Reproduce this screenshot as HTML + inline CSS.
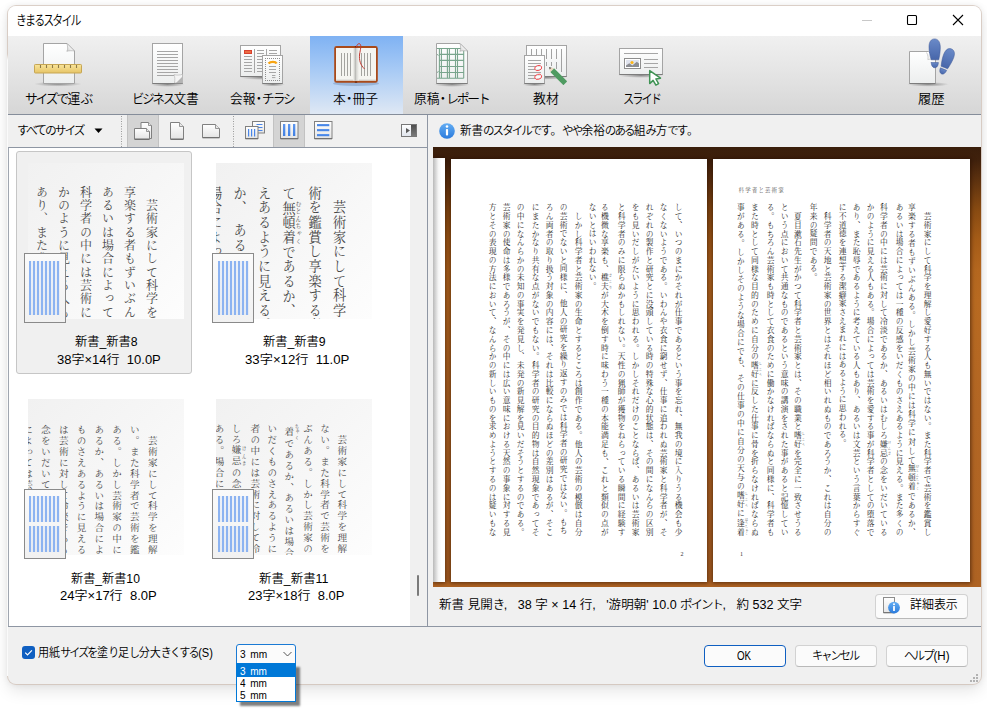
<!DOCTYPE html>
<html lang="ja">
<head>
<meta charset="utf-8">
<title>きまるスタイル</title>
<style>
html,body{margin:0;padding:0;}
body{width:987px;height:718px;overflow:hidden;background:#fff;position:relative;
  font-family:"Liberation Sans","Noto Sans CJK JP",sans-serif;font-size:13px;color:#000;}
.abs,.t,.inner *{position:absolute;box-sizing:border-box;}
.t{white-space:nowrap;line-height:20px;height:20px;letter-spacing:0;color:#000;transform-origin:0 50%;font-weight:350;}
.k{position:static !important;letter-spacing:-.17em;margin-right:.05em;}
.d{position:static !important;margin:0 -.24em;}
.winbg{position:absolute;left:8px;top:6px;width:973px;height:678px;border-radius:8px;background:#f0f0f0;
  box-shadow:0 0 0 1px rgba(205,185,172,.6),0 7px 16px rgba(0,0,0,.10),0 0 7px rgba(0,0,0,.09);}
.clip{position:absolute;left:8px;top:6px;width:973px;height:678px;border-radius:8px;overflow:hidden;}
.inner{position:absolute;left:-8px;top:-6px;width:987px;height:718px;}
.titlebar{left:7px;top:5px;width:975px;height:31px;background:#fff;}
.toolbar{left:7px;top:36px;width:975px;height:79px;background:linear-gradient(#f0f0f0,#e5e5e5 45%,#d6d6d6);border-bottom:1px solid #858d9a;}
.tabsel{left:310px;top:36px;width:93px;height:78px;background:linear-gradient(#7fb2f3,#a9cbf5 45%,#dfe8f4);}
.bar2{left:7px;top:115px;width:975px;height:32px;background:#f0f0f0;}
.pressed{background:#d4d4d4;border-left:1px solid #c2c2c2;border-right:1px solid #c2c2c2;}
.list{left:8px;top:147px;width:420px;height:480px;background:#fff;border:1px solid #8e96a3;border-left:1px solid #a0a6b0;}
.sb{left:410px;top:148px;width:17px;height:478px;background:#f0f0f0;}
.split{left:427px;top:115px;width:1px;height:512px;background:#8e96a3;}
.sel{left:16px;top:151px;width:176px;height:223px;background:#f0f0f0;border:1px solid #c6c6c6;border-radius:3px;}
.thumb{width:156px;height:156px;overflow:hidden;background:linear-gradient(135deg,#f1f1f1 0%,#f6f6f6 45%,#fdfdfd 100%);}
.tv{writing-mode:vertical-rl;font-family:"Liberation Serif","Noto Serif CJK JP","Noto Serif CJK SC",serif;color:#464646;white-space:nowrap;}
.tv div{position:static;display:block;}
.tv ruby,.tv rt{position:static;}
.mini{width:42px;height:70px;background:linear-gradient(#fafafa,#f1f1f1);border:1px solid #8a8a8a;}
.ml{width:31px;background:repeating-linear-gradient(90deg,#8cb3f1 0,#8cb3f1 2.1px,rgba(140,179,241,.12) 2.1px,rgba(140,179,241,.12) 4px);}
.tv rt{font-size:45%;}
.preview{left:433px;top:147px;width:549px;height:440px;overflow:hidden;
  background:linear-gradient(180deg,#3a1e0b 0%,#40210c 3%,#5a300f 7%,#874a12 14%,#a55c18 21%,#b4671f 28%,#b86a21 35%,#b26624 60%,#ae6323 100%);}
.pg{background:#fff;top:12px;height:423px;box-shadow:0 0 4px 1px rgba(35,12,0,.6);}
.vtxt{writing-mode:vertical-rl;font-family:"Liberation Serif","Noto Serif CJK JP","Noto Serif CJK SC",serif;font-size:8.25px;color:#262626;}
.vtxt .vl{position:static;display:block;width:14.3px;height:332.6px;line-height:14.3px;white-space:nowrap;letter-spacing:.48px;transform:scaleX(.94);}
.vtxt ruby,.vtxt rt{position:static;}
.vtxt rt{font-size:3.6px;letter-spacing:0;color:#555;}
.vtxt .vl.j{text-align:justify;text-align-last:justify;letter-spacing:0;}
.bottomline{left:7px;top:626px;width:975px;height:1px;background:#8e96a3;}
.btn{border:1px solid #d2d2d2;border-bottom-color:#b9b9b9;border-radius:4px;background:#fbfbfb;}
</style>
</head>
<body>
<div class="winbg"></div>
<div class="abs" style="left:7px;top:54px;width:1px;height:622px;background:linear-gradient(rgba(250,250,250,0),#fafafa 6px);"></div>
<div class="clip"><div class="inner">
  <div class="titlebar"></div>
  <svg style="left:857px;top:10px" width="120" height="22" viewBox="0 0 120 22">
    <path d="M5 10.5h10" stroke="#c8c8c8" stroke-width="1" fill="none"/>
    <rect x="50.5" y="5.5" width="9" height="9" rx="1" stroke="#000" stroke-width="1.1" fill="none"/>
    <path d="M96 5l10 10M106 5l-10 10" stroke="#000" stroke-width="1.1" fill="none"/>
  </svg>
  <div class="toolbar"></div>
  <div class="tabsel"></div>
  <svg style="left:0;top:0" width="987" height="160" viewBox="0 0 987 160">
    <defs>
      <linearGradient id="gp" x1="0" y1="0" x2="0" y2="1"><stop offset="0" stop-color="#ffffff"/><stop offset="1" stop-color="#eceeee"/></linearGradient>
      <linearGradient id="gr" x1="0" y1="0" x2="0" y2="1"><stop offset="0" stop-color="#f9e59b"/><stop offset="1" stop-color="#e6c466"/></linearGradient>
      <linearGradient id="gf" x1="0" y1="0" x2="0" y2="1"><stop offset="0" stop-color="#6a8ac8"/><stop offset="1" stop-color="#4766aa"/></linearGradient>
      <linearGradient id="gi" x1="0" y1="0" x2="0" y2="1"><stop offset="0" stop-color="#63adf3"/><stop offset="1" stop-color="#2b7bdc"/></linearGradient>
      <radialGradient id="gs"><stop offset="0" stop-color="#000" stop-opacity=".38"/><stop offset="1" stop-color="#000" stop-opacity="0"/></radialGradient>
      <linearGradient id="gfold" x1="0" y1="1" x2="1" y2="0"><stop offset="0" stop-color="#cfcfcf"/><stop offset=".6" stop-color="#fdfdfd"/></linearGradient>
    </defs>
    <!-- 1: size (page + ruler) -->
    <ellipse cx="58" cy="84" rx="24" ry="2.6" fill="url(#gs)"/>
    <path d="M43.5 43.5H67L74.5 51V83.5H43.5Z" fill="url(#gp)" stroke="#a4a4a4"/>
    <path d="M67 43.5C67.8 47 68 49.5 66.8 51.3C69 50.6 72 50.6 74.5 51Z" fill="url(#gfold)" stroke="#a8a8a8" stroke-width=".6"/>
    <rect x="34.5" y="64.5" width="47" height="8.5" rx=".8" fill="url(#gr)" stroke="#c6a654"/>
    <path d="M40.5 65v3M46.5 65v3M52.5 65v3M58.5 65v3M64.5 65v3M70.5 65v3M76.5 65v3" stroke="#8d7a48" stroke-width="1.1"/>
    <!-- 2: business doc -->
    <ellipse cx="167.500" cy="84.5" rx="17" ry="2.4" fill="url(#gs)"/>
    <rect x="152.500" y="43.500" width="30" height="40" fill="url(#gp)" stroke="#a4a4a4"/>
    <path d="M152.500 83.500h30" stroke="#7c7c7c"/>
    <path d="M157 51.500h21M157 54.500h21M157 57.500h21M157 60.500h21M157 63.500h21M157 66.500h21M157 69.500h21M157 72.500h21M157 75.500h17" stroke="#a6a6a6"/>
    <path d="M174.500 83C175 79.500 175 77 174 74.600C177 75.400 180 75.200 182.500 74.200V83Z" fill="#f4f4f4" stroke="#b0b0b0" stroke-width=".6"/>
    <path d="M176 83L182.500 76.500V83Z" fill="#b4b4b4"/>
    <!-- 3: newsletter -->
    <ellipse cx="262" cy="77.500" rx="22" ry="2.400" fill="url(#gs)"/>
    <rect x="240.500" y="45.500" width="40" height="31" fill="url(#gp)" stroke="#a4a4a4"/>
    <path d="M240.500 76.500h40" stroke="#7c7c7c"/>
    <rect x="244" y="50" width="8" height="4" fill="#d8402f"/><rect x="245" y="51.200" width="6" height="1.600" fill="#ef7a4a"/>
    <path d="M244 56.500h8M244 59.500h8M244 62.500h8M244 65.500h8M244 68.500h8M244 71.500h8" stroke="#a6a6a6"/>
    <path d="M254.500 49v24M266.500 49v24" stroke="#a6a6a6"/>
    <path d="M257 50.500h7M257 53.500h7M257 56.500h7M257 59.500h7M257 62.500h7M257 65.500h7M257 68.500h7M257 71.500h7M269 50.500h8M269 53.500h8" stroke="#a6a6a6"/>
    <ellipse cx="273" cy="84.500" rx="12" ry="2" fill="url(#gs)"/>
    <rect x="262.500" y="55.500" width="20" height="28" fill="url(#gp)" stroke="#a4a4a4"/>
    <path d="M262.500 83.500h20" stroke="#7c7c7c"/>
    <path d="M265 58.500h15M265 80.500h15M265.500 60v20M279.500 60v20" fill="none" stroke="#8f8f8f" stroke-dasharray="1 1"/>
    <path d="M268.500 63.600C270.500 61.300 275.500 61.300 276.600 63.600" stroke="#f7a412" stroke-width="2.300" fill="none"/>
    <path d="M269 66.500h7M269 69.500h7M269 72.500h7M272 75.500h3.400M272 77.600h3.400" stroke="#a6a6a6"/>
    <!-- 4: book -->
    <ellipse cx="356" cy="83.500" rx="23" ry="2.400" fill="#45608c" opacity=".28"/>
    <rect x="334.200" y="46" width="43.600" height="36.800" rx="2.400" fill="#a94a1a"/>
    <rect x="336" y="48" width="40" height="32.500" fill="#f5f5f1"/>
    <rect x="336" y="79.500" width="40" height="1.200" fill="#d8d8d4"/>
    <linearGradient id="gsp" x1="0" y1="0" x2="1" y2="0"><stop offset="0" stop-color="#f5f5f1"/><stop offset=".42" stop-color="#bcbcb8"/><stop offset=".58" stop-color="#d6d6d2"/><stop offset="1" stop-color="#f5f5f1"/></linearGradient>
    <rect x="353" y="48" width="6" height="32.500" fill="url(#gsp)"/>
    <path d="M354.500 46h3l-1.500 2zM354.500 82.800h3l-1.500 -2z" fill="#6f2c0c"/>
    <path d="M341.500 53v23M344.500 53v23M347.500 53v23M350.500 53v23M361.500 53v23M364.500 53v23M367.500 53v23M370.500 53v23" stroke="#a3a39f"/>
    <path d="M356.300 47.500C356.800 44.500 358.300 43.300 359.700 43.800C361.800 44.800 360.300 50 359.600 54C358.900 60 360.300 65 364.600 69" stroke="#c23a32" stroke-width="1" fill="none"/>
    <!-- 5: manuscript -->
    <ellipse cx="452" cy="84.500" rx="18" ry="2.400" fill="url(#gs)"/>
    <path d="M436.500 43.500H460L467.500 51V83.500H436.500Z" fill="url(#gp)" stroke="#a4a4a4"/>
    <path d="M436.500 83.500h31" stroke="#7c7c7c"/>
    <path d="M437 48.500h26.700M439.400 54.400h24.300M439.400 60.400h24.300M439.400 66.500h24.300M439.400 72.500h24.300M437 78.200h26.700M439.400 48.500v29.700M441.400 48.500v29.700M447.400 48.500v29.700M449.400 48.500v29.700M455.500 48.500v29.700M457.500 48.500v29.700M463.700 48.500v29.700" stroke="#79a58d" stroke-width="1.100" fill="none"/>
    <path d="M437 54.400l1.600 1M437 72.500l1.600 -1" stroke="#79a58d"/>
    <path d="M460 43.500C460.800 47 461 49.500 459.800 51.300C462 50.600 465 50.600 467.500 51Z" fill="url(#gfold)" stroke="#a8a8a8" stroke-width=".6"/>
    <!-- 6: teaching material -->
    <ellipse cx="546" cy="77.500" rx="21" ry="2.200" fill="url(#gs)"/>
    <rect x="526.500" y="45.500" width="40" height="31" fill="url(#gp)" stroke="#a4a4a4"/>
    <path d="M526.500 76.500h40" stroke="#7c7c7c"/>
    <path d="M531.500 49v10M536.500 49v10M541.500 49v10M546.500 49v10M551.500 49v10M556.500 49v10M561.500 49v23M546.500 62v4M551.500 62v4M556.500 62v7" stroke="#a2a2a2"/>
    <ellipse cx="534.500" cy="84.500" rx="12" ry="2" fill="url(#gs)"/>
    <rect x="524.500" y="55.500" width="20" height="28" fill="url(#gp)" stroke="#a4a4a4"/>
    <path d="M524.500 83.500h20" stroke="#7c7c7c"/>
    <path d="M528 60.500h13M528 63.500h13M528 66.500h13M528 69.500h13M528 72.500h13M528 75.500h13M528 78.500h13" stroke="#a6a6a6"/>
    <ellipse cx="538.200" cy="68" rx="3.600" ry="2.500" transform="rotate(-18 538.200 68)" fill="#fff" fill-opacity=".7" stroke="#f24a50" stroke-width=".9"/>
    <ellipse cx="538.200" cy="76.800" rx="3.600" ry="2.500" transform="rotate(-18 538.200 76.800)" fill="#fff" fill-opacity=".7" stroke="#f24a50" stroke-width=".9"/>
    <g transform="translate(549 67) rotate(45)">
      <path d="M0 0L4.600 -2.700V2.700Z" fill="#ecd9bf"/><path d="M0 0L2.200 -1.300V1.300Z" fill="#555"/>
      <rect x="4.600" y="-2.700" width="18.500" height="5.400" rx=".6" fill="#4f9b61"/>
    </g>
    <!-- 7: slide -->
    <ellipse cx="641" cy="75.500" rx="23" ry="2.400" fill="url(#gs)"/>
    <rect x="619.500" y="48.500" width="43" height="26" fill="url(#gp)" stroke="#a4a4a4"/>
    <path d="M619.500 74.500h43" stroke="#7c7c7c"/>
    <path d="M624 53.500h34M644 59.500h14M644 63.500h14M644 67.500h14" stroke="#a6a6a6"/>
    <rect x="624.500" y="58.500" width="16" height="10" fill="#fff" stroke="#8e8e8e"/>
    <rect x="626" y="60" width="13" height="7" fill="#dfe3ee"/>
    <path d="M626 67V65.600L629.300 63.300L632.300 65.400L636.800 61.800L639 63.600V67Z" fill="#8b8d92"/>
    <circle cx="632" cy="62.500" r="1.600" fill="#fdb515"/>
    <path d="M649.700 70.600V83.600L653.100 80.400L655.900 85.200L658.600 83.700L655.900 79L660.500 78.200Z" fill="#fff" stroke="#3f9354" stroke-width="1.500" stroke-linejoin="round"/>
    <!-- 8: history -->
    <ellipse cx="928" cy="84.300" rx="21" ry="2.400" fill="url(#gs)"/>
    <path d="M909.500 51.500H928.500L935.500 58V83.500H909.500Z" fill="url(#gp)" stroke="#a4a4a4"/>
    <path d="M909.500 83.500h26" stroke="#7c7c7c"/>
    <path d="M926.500 52.500C928 55 928.300 57.500 927.800 59.500C930.500 59 933 59.200 935.500 59.700" fill="#f4f4f4" stroke="#b4b4b4" stroke-width=".6"/>
    <path d="M934.600 38.900C938.400 38.900 940.400 42.400 940.300 48C940.200 53 939.300 57.500 938.700 59.800L931.200 59.800C930 56 928.900 51 929 46.500C929.100 42 931 38.900 934.600 38.900Z" fill="url(#gf)" stroke="#3c5796" stroke-width=".5"/>
    <path d="M931.200 62.500L938.400 62.500C938.300 64.800 937.500 67.600 934.900 67.800C932.200 67.800 931.200 65 931.200 62.200Z" fill="url(#gf)" stroke="#3c5796" stroke-width=".5"/>
    <g transform="translate(946.3 60.3) rotate(22) scale(.93) translate(-946 -60)">
      <path d="M946.600 46.600C950.400 46.600 952.400 50.100 952.300 55.700C952.200 60.700 951.300 65.200 950.700 68L943.200 68C942 63.700 940.900 58.700 941 54.200C941.100 49.700 943 46.600 946.600 46.600Z" fill="url(#gf)" stroke="#3c5796" stroke-width=".5"/>
      <path d="M943.200 69.900L950.400 69.900C950.300 72.500 949.500 75.300 946.900 75.500C944.200 75.500 943.200 72.700 943.200 69.900Z" fill="url(#gf)" stroke="#3c5796" stroke-width=".5"/>
    </g>
  </svg>

  <div class="bar2"></div>
  <svg style="left:94px;top:128px" width="10" height="6"><path d="M0.5 0.5h8l-4 4.5z" fill="#000"/></svg>
  <div class="pressed" style="left:127px;top:115px;width:32px;height:32px"></div>
  <div class="pressed" style="left:273px;top:115px;width:32px;height:32px"></div>
  <svg style="left:0;top:110px" width="987" height="40" viewBox="0 110 987 40">
    <defs>
      <linearGradient id="gq" x1="0" y1="0" x2="0" y2="1"><stop offset="0" stop-color="#ffffff"/><stop offset="1" stop-color="#e4e4e4"/></linearGradient>
      <linearGradient id="gb" x1="0" y1="0" x2="0" y2="1"><stop offset="0" stop-color="#5f97ee"/><stop offset="1" stop-color="#3f7fe2"/></linearGradient>
      <linearGradient id="gd" x1="0" y1="0" x2="0" y2="1"><stop offset="0" stop-color="#4e4e4e"/><stop offset="1" stop-color="#7a7a7a"/></linearGradient>
      <linearGradient id="gl" x1="0" y1="0" x2="0" y2="1"><stop offset="0" stop-color="#ffffff"/><stop offset="1" stop-color="#dfe4ec"/></linearGradient>
    </defs>
    <path d="M121.500 116v31M233.500 116v31" stroke="#9a9a9a" stroke-dasharray="1 1.500"/>
    <!-- size filter icons -->
    <path d="M141 122.500H148.500L151.500 125.500V138.500H141Z" fill="url(#gq)" stroke="#808080"/>
    <path d="M148.500 122.500V125.500H151.500" fill="#e8e8e8" stroke="#808080" stroke-width=".8"/>
    <path d="M134.500 128.500H146.500L149.500 131.500V139H134.500Z" fill="url(#gq)" stroke="#808080"/>
    <path d="M146.500 128.500V131.500H149.500" fill="#e8e8e8" stroke="#808080" stroke-width=".8"/>
    <path d="M134.500 139.400h15" stroke="#6a6a6a"/>
    <path d="M170.500 122.500H179.500L183.500 126.500V139H170.500Z" fill="url(#gq)" stroke="#808080"/>
    <path d="M179.500 122.500V126.500H183.500" fill="#e8e8e8" stroke="#808080" stroke-width=".8"/>
    <path d="M170.500 139.400h13" stroke="#6a6a6a"/>
    <path d="M202.500 124.500H215.500L219.500 128.500V137.500H202.500Z" fill="url(#gq)" stroke="#808080"/>
    <path d="M215.500 124.500V128.500H219.500" fill="#e8e8e8" stroke="#808080" stroke-width=".8"/>
    <path d="M202.500 137.800h17" stroke="#6a6a6a"/>
    <!-- direction icons -->
    <rect x="252.500" y="121.500" width="12" height="11.500" fill="url(#gq)" stroke="#808080"/>
    <path d="M256.500 124.500h6M256.500 127.500h6M256.500 130.500h6" stroke="#4a86e8" stroke-width="1.200"/>
    <rect x="245.500" y="126.500" width="12.500" height="12" fill="url(#gq)" stroke="#808080"/>
    <path d="M245.500 138.800h12.500" stroke="#6a6a6a"/>
    <path d="M248.600 129v7.500M251.600 129v7.500M254.600 129v7.500" stroke="#4a86e8" stroke-width="1.200"/>
    <rect x="280.500" y="121.500" width="17.500" height="17" fill="url(#gq)" stroke="#808080"/>
    <path d="M280.500 138.800h17.500" stroke="#6a6a6a"/>
    <rect x="283" y="124" width="2.300" height="12" fill="url(#gb)"/><rect x="288" y="124" width="2.300" height="12" fill="url(#gb)"/><rect x="293" y="124" width="2.300" height="12" fill="url(#gb)"/>
    <rect x="314.500" y="121.500" width="17.500" height="17" fill="url(#gq)" stroke="#808080"/>
    <path d="M314.500 138.800h17.500" stroke="#6a6a6a"/>
    <rect x="317" y="124" width="12.300" height="2.200" fill="url(#gb)"/><rect x="317" y="129" width="12.300" height="2.200" fill="url(#gb)"/><rect x="317" y="134" width="12.300" height="2.200" fill="url(#gb)"/>
    <!-- toggle -->
    <rect x="401.500" y="124.500" width="15" height="12" fill="url(#gl)" stroke="#777"/>
    <rect x="411" y="125" width="5" height="11" fill="url(#gd)"/>
    <path d="M406 128v5.200l4 -2.600z" fill="#5a5a5a"/>
    <!-- info icon -->
    <circle cx="447" cy="131" r="7.800" fill="url(#gi)"/>
    <circle cx="447" cy="126.500" r="1.300" fill="#fff"/>
    <rect x="445.900" y="128.900" width="2.200" height="6.600" rx=".8" fill="#fff"/>
  </svg>

  <div class="list"></div>
  <div class="sb"></div>
  <div style="left:417px;top:575px;width:2px;height:21px;background:#7a7a7a;border-radius:1px"></div>
  <div class="split"></div>
  <div class="sel"></div>
  <!-- thumbnail 1 -->
  <div class="thumb" style="left:28px;top:163px;">
    <div class="tv" style="right:22.5px;top:23.3px;font-size:12px;letter-spacing:1.33px;line-height:22px;">
      <div>　芸術家にして科学を理解し</div>
      <div>享楽する者もずいぶんある。</div>
      <div>あるいは場合によっては一種</div>
      <div>科学者の中には芸術に対して</div>
      <div>かのように見える人もある。</div>
      <div>あり、また恥辱であるように</div>
      <div>に不道徳を連想する潔癖家さ</div>
    </div>
  </div>
  <!-- thumbnail 2 -->
  <div class="thumb" style="left:216px;top:163px;">
    <div class="tv" style="right:22px;top:23.2px;font-size:13.2px;letter-spacing:1.47px;line-height:24.5px;">
      <div>　芸術家にして科学を理解し</div>
      <div>術を鑑賞し享楽する者もずい</div>
      <div>て<ruby>無頓着<rt>むとんちゃく</rt></ruby>であるか、あるい</div>
      <div>えあるように見える。また多</div>
      <div>か、　あるいはむしろ嫌忌の</div>
      <div>場合によっては芸術を愛する</div>
      <div>あり、また恥辱であるように</div>
    </div>
  </div>
  <!-- thumbnail 3 -->
  <div class="thumb" style="left:28px;top:399px;">
    <div class="tv" style="right:23.3px;top:26px;font-size:9.6px;letter-spacing:1.25px;line-height:17.8px;">
      <div>　芸術家にして科学を理解し愛好</div>
      <div>い。また科学者で芸術を鑑賞し享</div>
      <div>ある。しかし芸術家の中には科学</div>
      <div>あるか、あるいは場合によっては</div>
      <div>ものさえあるように見える。また</div>
      <div>は芸術に対して冷淡であるか、あ</div>
      <div>念をいだいているかのように見え</div>
      <div>によっては芸術を愛する事が科学</div>
      <div>あり、また恥辱であるように考え</div>
    </div>
  </div>
  <!-- thumbnail 4 -->
  <div class="thumb" style="left:216px;top:399px;">
    <div class="tv" style="right:21.8px;top:24.6px;font-size:9.6px;letter-spacing:1.25px;line-height:17.1px;">
      <div>　芸術家にして科学を理解し愛好</div>
      <div>ない。また科学者で芸術を鑑賞し</div>
      <div>ぶんある。しかし芸術家の中には</div>
      <div><ruby>着<rt>ちゃく</rt></ruby>であるか、あるいは場合によっ</div>
      <div>いだくものさえあるように見える</div>
      <div>者の中には芸術に対して冷淡であ</div>
      <div>しろ<ruby>嫌忌<rt>けんき</rt></ruby>の念をいだいているかの</div>
      <div>ある。場合によっては芸術を愛す</div>
      <div>であり、また恥辱であるように考</div>
    </div>
  </div>
  <!-- mini page icons -->
  <div class="mini" style="left:24px;top:253px;"><div class="ml" style="left:4px;top:7px;height:54px;"></div></div>
  <div class="mini" style="left:212px;top:253px;"><div class="ml" style="left:5px;top:7px;height:54px;"></div></div>
  <div class="mini" style="left:24px;top:489px;"><div class="ml" style="left:4px;top:6px;height:26px;"></div><div class="ml" style="left:4px;top:36px;height:26px;"></div></div>
  <div class="mini" style="left:212px;top:489px;"><div class="ml" style="left:5px;top:6px;height:26px;"></div><div class="ml" style="left:5px;top:36px;height:26px;"></div></div>

  <div class="preview">
    <div style="left:0;top:11px;width:12px;height:424px;background:linear-gradient(90deg,#b9b9b9,#f4f4f4 45%,#fff 70%);box-shadow:0 0 4px 1px rgba(35,12,0,.6);"></div>
    <div class="pg" style="left:18px;width:256px;">
      <div class="vtxt" style="left:32.7px;top:44.2px;width:200.3px;height:332.6px;">
<div class="vl j">して、いつのまにかそれが仕事であるという事を忘れ、無我の境に入りうる機会も少</div>
<div class="vl j">なくないようである。いわんや衣食に窮せず、仕事に追われぬ芸術家と科学者が、そ</div>
<div class="vl j">れぞれの製作と研究とに没頭している時の特殊な心的状態は、その間になんらの区別</div>
<div class="vl j">をも見いだしがたいように思われる。しかしそれだけのことならば、あるいは芸術家</div>
<div class="vl j">と科学者のみに限らぬかもしれない。天性の猟師が獲物をねらっている瞬間に経験す</div>
<div class="vl j">る機微な享楽も、<ruby>樵夫<rt>きこり</rt></ruby>が大木を倒す時に味わう一種の本能満足も、これと類似の点が</div>
<div class="vl">ないとはいわれない。</div>
<div class="vl j">　しかし科学者と芸術家の生命とするところは創作である。他人の芸術の模倣は自分</div>
<div class="vl">の芸術でないと同様に、他人の研究を繰り返すのみでは科学者の研究ではない。もち</div>
<div class="vl j">ろん両者の取り扱う対象の内容には、それは比較にならぬほどの差別はあるが、そこ</div>
<div class="vl j">にまたかなり共有な点がないでもない。科学者の研究の目的物は自然現象であってそ</div>
<div class="vl j">の中になんらかの未知の事実を発見し、未発の新見解を見いだそうとするのである。</div>
<div class="vl j">芸術家の使命は多様であろうが、その中には広い意味における天然の事象に対する見</div>
<div class="vl j">方とその表現の方法において、なんらかの新しいものを求めようとするのは疑いもな</div>
      </div>
      <div class="t" style="left:229.5px;top:385px;font-size:6px;font-family:'Liberation Serif',serif;color:#333">2</div>
    </div>
    <div class="pg" style="left:280px;width:257.3px;">
      <div class="t" style="left:25.6px;top:21px;font-size:5.5px;letter-spacing:1.1px;font-family:'Liberation Serif','Noto Serif CJK JP','Noto Serif CJK SC',serif;color:#444">科学者と芸術家</div>
      <div class="vtxt" style="left:20.4px;top:44.2px;width:200.3px;height:332.6px;">
<div class="vl j">　芸術家にして科学を理解し愛好する人も無いではない。また科学者で芸術を鑑賞し</div>
<div class="vl j">享楽する者もずいぶんある。しかし芸術家の中には科学に対して<ruby>無頓着<rt>むとんちゃく</rt></ruby>であるか、</div>
<div class="vl j">あるいは場合によっては一種の反感をいだくものさえあるように見える。また多くの</div>
<div class="vl j">科学者の中には芸術に対して冷淡であるか、あるいはむしろ<ruby>嫌忌<rt>けんき</rt></ruby>の念をいだいている</div>
<div class="vl j">かのように見える人もある。場合によっては芸術を愛する事が科学者としての堕落で</div>
<div class="vl j">あり、また恥辱であるように考えている人もあり、あるいは文芸という言葉からすぐ</div>
<div class="vl">に不道徳を連想する潔癖家さえまれにはあるように思われる。</div>
<div class="vl j">　科学者の天地と芸術家の世界とはそれほど相いれぬものであろうか、これは自分の</div>
<div class="vl">年来の疑問である。</div>
<div class="vl j">　夏目漱石先生がかつて科学者と芸術家とは、その職業と<ruby>嗜好<rt>しこう</rt></ruby>を完全に一致させうる</div>
<div class="vl j">という点において共通なものであるという意味の講演をされた事があると記憶してい</div>
<div class="vl j">る。もちろん芸術家も時として衣食のために働かなければならぬと同様に、科学者も</div>
<div class="vl j">また時として同様な目的のために自分の<ruby>嗜好<rt>しこう</rt></ruby>に反した仕事に骨を折らなければならぬ</div>
<div class="vl j">事がある。しかしそのような場合にでも、その仕事の中に自分の天与の<ruby>嗜好<rt>しこう</rt></ruby>に<ruby>逢着<rt>ほうちゃく</rt></ruby></div>
      </div>
      <div class="t" style="left:27px;top:385px;font-size:6px;font-family:'Liberation Serif',serif;color:#333">1</div>
    </div>
  </div>
  <div class="btn" style="left:875px;top:594px;width:93px;height:25px;"></div>
  <svg style="left:880px;top:595px" width="22" height="22" viewBox="880 595 22 22">
    <defs><linearGradient id="gi2" x1="0" y1="0" x2="0" y2="1"><stop offset="0" stop-color="#63adf3"/><stop offset="1" stop-color="#2b7bdc"/></linearGradient>
    <linearGradient id="gp2" x1="0" y1="0" x2="0" y2="1"><stop offset="0" stop-color="#ffffff"/><stop offset="1" stop-color="#e6e6e6"/></linearGradient></defs>
    <rect x="883.500" y="597.500" width="11" height="15" fill="url(#gp2)" stroke="#8c8c8c"/>
    <path d="M883.500 612.800h11" stroke="#6e6e6e"/>
    <circle cx="894" cy="607.600" r="5.900" fill="url(#gi2)"/>
    <circle cx="894" cy="604.300" r="1" fill="#fff"/>
    <rect x="893.100" y="606" width="1.800" height="5" rx=".6" fill="#fff"/>
  </svg>
  <div style="left:976px;top:674px;width:2px;height:2px;background:#b2b2b2;box-shadow:-3px 3px 0 #b2b2b2,0 3px 0 #b2b2b2,-6px 6px 0 #b2b2b2,-3px 6px 0 #b2b2b2,0 6px 0 #b2b2b2;"></div>
  <div class="bottomline"></div>
  <div style="left:22px;top:646px;width:13px;height:13px;border-radius:3px;background:#0f5fc1;"></div>
  <svg style="left:22px;top:646px" width="13" height="13"><path d="M3.2 6.6l2.3 2.3 4.4-4.6" stroke="#fff" stroke-width="1.2" fill="none"/></svg>
  <div class="btn" style="left:704px;top:645px;width:82px;height:22px;border-color:#0f5fc1;"></div>
  <div class="btn" style="left:795px;top:645px;width:82px;height:22px;"></div>
  <div class="btn" style="left:886px;top:645px;width:82px;height:22px;"></div>
</div></div>

<!-- combo + dropdown (overflows window) -->
<div class="abs" style="left:236px;top:644px;width:60px;height:20px;border:1px solid #1a7ad4;border-radius:3px 3px 0 0;background:#fbfbfb;"></div>
<svg class="abs" style="left:282px;top:651px" width="12" height="7"><path d="M1.5 1l4 4 4-4" stroke="#555" stroke-width="1" fill="none"/></svg>
<div class="abs" style="left:236px;top:663px;width:60px;height:39px;border:1px solid #0078d7;background:#fff;box-shadow:4px 4px 2px rgba(0,0,0,.5);"></div>
<div class="abs" style="left:237px;top:664px;width:58px;height:12.500px;background:#0078d7;"></div>
<div class="t" id="title" style="left:16.3px;top:10.6px;font-size:13.5px;transform:scaleX(0.8108);"><span class="k">きまるスタイル</span></div>
<div class="t" id="tb1" style="left:25.0px;top:89.2px;font-size:13px;transform:scaleX(0.9816);"><span class="k">サイズで</span>運<span class="k">ぶ</span></div>
<div class="t" id="tb2" style="left:132.3px;top:89.2px;font-size:13px;transform:scaleX(0.9552);"><span class="k">ビジネス</span>文書</div>
<div class="t" id="tb3" style="left:229.5px;top:89.2px;font-size:13px;transform:scaleX(0.9779);">会報<span class="d">・</span><span class="k">チラシ</span></div>
<div class="t" id="tb4" style="left:333.4px;top:89.2px;font-size:13px;transform:scaleX(0.9863);">本<span class="d">・</span>冊子</div>
<div class="t" id="tb5" style="left:414.0px;top:89.2px;font-size:13px;transform:scaleX(0.9805);">原稿<span class="d">・</span><span class="k">レポート</span></div>
<div class="t" id="tb6" style="left:533.0px;top:89.2px;font-size:13px;transform:scaleX(0.9994);">教材</div>
<div class="t" id="tb7" style="left:622.7px;top:89.2px;font-size:13px;transform:scaleX(0.8594);"><span class="k">スライド</span></div>
<div class="t" id="tb8" style="left:917.6px;top:89.2px;font-size:13px;transform:scaleX(1.0263);">履歴</div>
<div class="t" id="allsize" style="left:16.5px;top:120.5px;font-size:12px;transform:scaleX(0.9773);"><span class="k">すべてのサイズ</span></div>
<div class="t" id="info" style="left:460.0px;top:120.9px;font-size:12px;transform:scaleX(0.9598);">新書<span class="k">のスタイルです</span>。<span class="k">やや</span>余裕<span class="k">のある</span>組<span class="k">み</span>方<span class="k">です</span>。</div>
<div class="t" id="status" style="left:438.9px;top:595.0px;font-size:12px;transform:scaleX(1.0473);">新書 見開<span class="k">き</span>,&nbsp;&nbsp; 38 字 × 14 行,&nbsp;&nbsp; '游明朝' 10.0 <span class="k">ポイント</span>,&nbsp;&nbsp; 約 532 文字</div>
<div class="t" id="detail" style="left:909.7px;top:595.4px;font-size:12px;transform:scaleX(0.9955);">詳細表示</div>
<div class="t" id="chk" style="left:37.5px;top:643.0px;font-size:12px;transform:scaleX(0.9220);">用紙<span class="k">サイズを</span>塗<span class="k">り</span>足<span class="k">し</span>分大<span class="k">きくする</span>(S)</div>
<div class="t" id="ok" style="left:736.9px;top:645.8px;font-size:12px;transform:scaleX(0.8130);">OK</div>
<div class="t" id="cancel" style="left:811.8px;top:645.8px;font-size:12px;transform:scaleX(0.9275);"><span class="k">キャンセル</span></div>
<div class="t" id="help" style="left:903.5px;top:645.8px;font-size:12px;transform:scaleX(0.9649);"><span class="k">ヘルプ</span>(H)</div>
<div class="t" id="combo" style="left:240.3px;top:644.2px;font-size:11px;transform:scaleX(0.9220);word-spacing:2px;">3 mm</div>
<div class="t" id="dd1" style="left:239.5px;top:660.8px;font-size:11px;transform:scaleX(0.9119);word-spacing:2px;color:#fff;">3 mm</div>
<div class="t" id="dd2" style="left:239.5px;top:673.0px;font-size:11px;transform:scaleX(0.9119);word-spacing:2px;">4 mm</div>
<div class="t" id="dd3" style="left:239.5px;top:684.8px;font-size:11px;transform:scaleX(0.9119);word-spacing:2px;">5 mm</div>
<div class="t" id="n1" style="left:74.8px;top:332.2px;font-size:12px;transform:scaleX(1.0218);">新書_新書8</div>
<div class="t" id="d1" style="left:57.4px;top:350.2px;font-size:12px;transform:scaleX(1.0843);">38字×14行&nbsp; 10.0P</div>
<div class="t" id="n2" style="left:262.6px;top:332.2px;font-size:12px;transform:scaleX(1.0218);">新書_新書9</div>
<div class="t" id="d2" style="left:245.2px;top:350.2px;font-size:12px;transform:scaleX(1.1008);">33字×12行&nbsp; 11.0P</div>
<div class="t" id="n3" style="left:71.4px;top:568.6px;font-size:12px;transform:scaleX(1.0128);">新書_新書10</div>
<div class="t" id="d3" style="left:59.9px;top:586.0px;font-size:12px;transform:scaleX(1.0858);">24字×17行&nbsp; 8.0P</div>
<div class="t" id="n4" style="left:258.5px;top:568.6px;font-size:12px;transform:scaleX(1.0351);">新書_新書11</div>
<div class="t" id="d4" style="left:248.0px;top:586.0px;font-size:12px;transform:scaleX(1.0824);">23字×18行&nbsp; 8.0P</div>
</body>
</html>
